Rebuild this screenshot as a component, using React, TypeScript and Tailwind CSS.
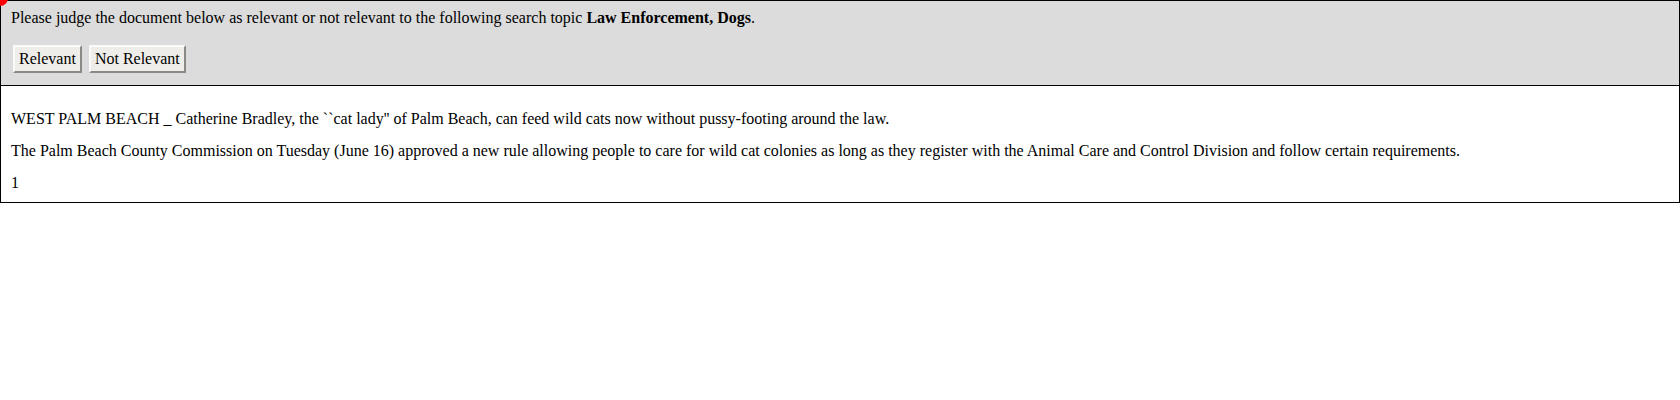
import React from "react";

function Btn({ children }: { children: React.ReactNode }) {
  return (
    <button
      type="button"
      className="h-[28px] px-[4px] bg-[#efede9] text-black text-[16px] leading-[18px] border-2 border-t-[#fbfaf8] border-l-[#fbfaf8] border-r-[#8a8985] border-b-[#8a8985] font-['Liberation_Serif',serif]"
    >
      {children}
    </button>
  );
}

export default function App() {
  return (
    <div className="relative w-[1680px] font-['Liberation_Serif',serif] text-[16px] leading-[18px] text-black bg-white">
      <div className="border border-black bg-[#dcdcdc] pl-[10px] pt-[8px] pb-[12px]">
        <div>
          Please judge the document below as relevant or not relevant to the following search topic{" "}
          <b>Law Enforcement, Dogs</b>.
        </div>
        <div className="mt-[18px] flex gap-[7px] pl-[2px]">
          <Btn>Relevant</Btn>
          <Btn>Not Relevant</Btn>
        </div>
      </div>
      <div className="border border-t-0 border-black pl-[10px] pt-[24px] pb-[10px] flex flex-col gap-[14px]">
        <p>
          WEST PALM BEACH _ Catherine Bradley, the ``cat lady'' of Palm Beach, can feed wild cats now without pussy-footing around the law.
        </p>
        <p>
          The Palm Beach County Commission on Tuesday (June 16) approved a new rule allowing people to care for wild cat colonies as long as they register with the Animal Care and Control Division and follow certain requirements.
        </p>
        <p>1</p>
      </div>
      <div className="absolute left-[-8px] top-[-10px] w-[16px] h-[16px] rounded-full bg-[#ff0000]" />
    </div>
  );
}
